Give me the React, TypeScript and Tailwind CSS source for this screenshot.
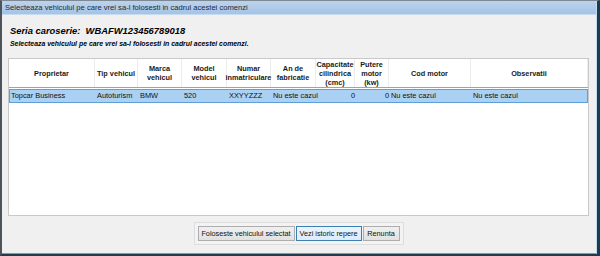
const cols = [
  { w: 'w-[86px]', head: ['Proprietar'], cell: 'Topcar Business', align: 'text-left' },
  { w: 'w-[43px]', head: ['Tip vehicul'], cell: 'Autoturism', align: 'text-left' },
  { w: 'w-[44px]', head: ['Marca', 'vehicul'], cell: 'BMW', align: 'text-left' },
  { w: 'w-[45px]', head: ['Model', 'vehicul'], cell: '520', align: 'text-left' },
  { w: 'w-[44px]', head: ['Numar', 'inmatriculare'], cell: 'XXYYZZZ', align: 'text-left' },
  { w: 'w-[45px]', head: ['An de', 'fabricatie'], cell: 'Nu este cazul', align: 'text-left' },
  { w: 'w-[39px]', head: ['Capacitate', 'cilindrica', '(cmc)'], cell: '0', align: 'text-right' },
  { w: 'w-[34px]', head: ['Putere', 'motor', '(kw)'], cell: '0', align: 'text-right' },
  { w: 'w-[82px]', head: ['Cod motor'], cell: 'Nu este cazul', align: 'text-left' },
  { w: 'flex-1', head: ['Observatii'], cell: 'Nu este cazul', align: 'text-left' },
];

export default function App() {
  return (
    <div className="w-[600px] h-[256px] flex flex-col bg-[#1c3e4f] font-['Liberation_Sans',Arial,sans-serif] text-black border-t border-t-[#7d8893] border-l-2 border-l-[#4d545b] border-r-[3px] border-r-[#173e50] border-b-2 border-b-[#1c3d4d] overflow-hidden">
      <div className="flex-1 flex flex-col border-b border-b-[#3ab2e3] border-r border-r-[#c5dcef]">
        {/* title bar */}
        <div className="h-[14px] flex items-center px-[3px] bg-gradient-to-b from-[#bcd3ec] to-[#a6c3e5] border-b border-b-[#c6dcf1]">
          <span className="text-[7.6px] text-[#1d2a38] leading-none">
            Selecteaza vehiculul pe care vrei sa-l folosesti in cadrul acestei comenzi
          </span>
        </div>

        <div className="flex-1 flex flex-col bg-[#f0f0f0] pl-[6px] pr-[7px]">
          <div className="pt-[10px] text-[9.4px] font-bold italic leading-[11px] pl-[2px]">
            Seria caroserie:&nbsp;&nbsp;WBAFW123456789018
          </div>
          <div className="pt-[3px] text-[6.9px] font-bold italic leading-[9px] pl-[2px]">
            Selecteaza vehiculul pe care vrei sa-l folosesti in cadrul acestei comenzi.
          </div>

          {/* table */}
          <div className="mt-[10px] h-[158px] bg-white border border-[#c9c9c9] flex flex-col">
            <div className="h-[29px] flex border-b border-b-[#a3a3a3]">
              {cols.map((c, i) => (
                <div
                  key={i}
                  className={`${c.w} flex flex-col items-center justify-center border-r border-r-[#ececec] text-[7.3px] font-bold leading-[9px] text-center text-[#1a1a1a]`}
                >
                  {c.head.map((h) => (
                    <span key={h}>{h}</span>
                  ))}
                </div>
              ))}
            </div>
            <div className="mt-[1px] h-[14px] flex bg-[#aad0f3] border border-[#5f9fd6]">
              {cols.map((c, i) => (
                <div
                  key={i}
                  className={`${c.w} ${c.align} shrink-0 last:shrink pl-[1px] pr-[1px] text-[7.4px] leading-[12px] text-[#111] whitespace-nowrap`}
                >
                  {c.cell}
                </div>
              ))}
            </div>
          </div>

          {/* buttons */}
          <div className="flex justify-center mt-[6px]">
            <div className="flex gap-[1px] p-[3px] bg-[#f3f3f3] border border-[#dddddd]">
              <button className="h-[15px] w-[97px] text-[7.3px] leading-none border border-[#adadad] bg-gradient-to-b from-[#f0f0f0] to-[#e1e1e1] text-[#111]">
                Foloseste vehiculul selectat
              </button>
              <button className="h-[15px] w-[66px] text-[7.3px] leading-none border border-[#3c7fb1] bg-gradient-to-b from-[#eaf4fc] to-[#dcecfc] text-[#111]">
                Vezi istoric repere
              </button>
              <button className="h-[15px] w-[37px] text-[7.3px] leading-none border border-[#adadad] bg-gradient-to-b from-[#f0f0f0] to-[#e1e1e1] text-[#111]">
                Renunta
              </button>
            </div>
          </div>
        </div>
      </div>
    </div>
  );
}
